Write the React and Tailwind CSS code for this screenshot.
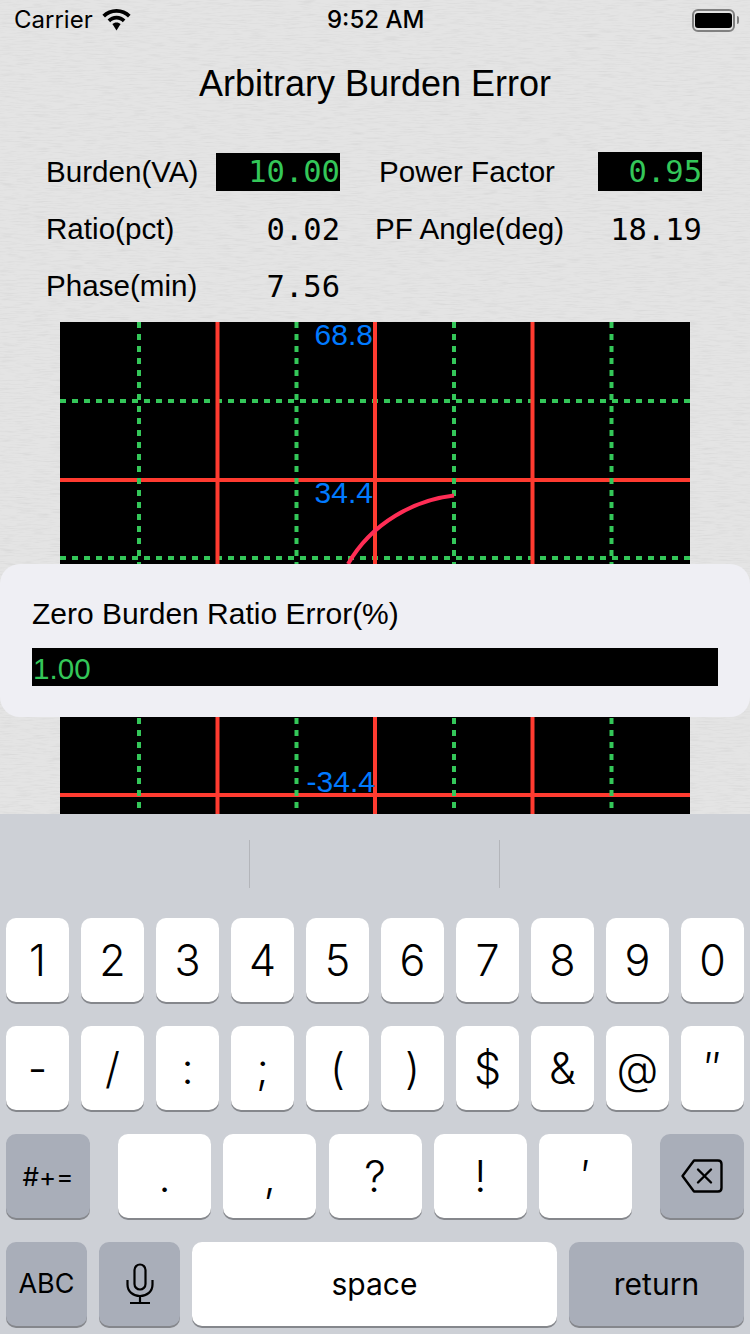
import React from 'react';

const sans = "font-['Liberation_Sans',Arial,sans-serif]";
const mono = "font-['DejaVu_Sans_Mono',monospace]";

const WifiIcon = () => (
    <svg width="29" height="22" viewBox="0 0 29 22" fill="#000">
        <path d="M14.5 0C9 0 4 2.200 0.400 5.800L3 8.600C6 5.600 10 3.800 14.500 3.800S23 5.600 26 8.600L28.600 5.800C25 2.200 20 0 14.500 0z" />
        <path d="M14.500 6.800C11 6.800 8 8.200 5.600 10.500L8.200 13.200C9.900 11.600 12.100 10.600 14.500 10.600S19.100 11.600 20.800 13.200L23.400 10.500C21 8.200 18 6.800 14.500 6.800z" />
        <path d="M14.500 13.400C12.800 13.400 11.400 14 10.400 15L14.500 21.500L18.600 15C17.600 14 16.200 13.400 14.500 13.400z" />
    </svg>
);

const BatteryIcon = () => (
    <div className="flex items-center gap-[2px]">
        <div className="w-[43px] h-[23px] rounded-[6px] border-2 border-[#808080] py-[2px] px-[1px]">
            <div className="w-full h-full rounded-[3px] bg-black" />
        </div>
        <div className="w-[2px] h-[8px] rounded-r-sm bg-[#808080]" />
    </div>
);

const MicIcon = () => (
    <svg width="30" height="42" viewBox="0 0 30 42" fill="none" stroke="#000" strokeWidth="2.2">
        <rect x="9.500" y="1.500" width="11" height="25" rx="5.500" />
        <path d="M2.500 17v4.500C2.500 28.500 8 33 15 33s12.500-4.500 12.500-11.500V17" />
        <path d="M15 33v7M5 40h20" />
    </svg>
);

const DeleteIcon = () => (
    <svg width="42" height="34" viewBox="0 0 42 34" fill="none" stroke="#000" strokeWidth="2.4" strokeLinejoin="round">
        <path d="M13 1.500H37C39 1.500 40.500 3 40.500 5V29C40.500 31 39 32.500 37 32.500H13L1.500 17z" />
        <path d="M17 10.500L30 23.500M30 10.500L17 23.500" strokeLinecap="round" />
    </svg>
);

const Key = ({ children, className = '', dark = false }) => (
    <div className={`h-[84px] rounded-[10px] flex items-center justify-center text-black shadow-[0_2px_0_#85878c] ${dark ? 'bg-[#a9aeb9]' : 'bg-white'} ${className}`}>
        {children}
    </div>
);

const ChartGrid = () => {
    const greenV = [79, 236.500, 394, 551.500];
    const redV = [157.500, 315, 472.500];
    return (
        <svg width="630" height="492" viewBox="0 0 630 492" className="block bg-black">
            {[158, 473].map((y) => (
                <line key={y} x1="0" x2="630" y1={y} y2={y} stroke="#ff3b30" strokeWidth="4" />
            ))}
            {greenV.map((x) => (
                <line key={x} x1={x} x2={x} y1="0" y2="492" stroke="#34c759" strokeWidth="4" strokeDasharray="6 6" />
            ))}
            {[79, 236].map((y) => (
                <line key={y} x1="0" x2="630" y1={y} y2={y} stroke="#34c759" strokeWidth="4" strokeDasharray="6 6" />
            ))}
            {redV.map((x) => (
                <line key={x} x1={x} x2={x} y1="0" y2="492" stroke="#ff3b30" strokeWidth="4" />
            ))}
            <path d="M394 173.500C355 178 312 200 288 242" fill="none" stroke="#ff2d55" strokeWidth="4" />
            <g fill="#007aff" fontSize="30" fontFamily="'Liberation Sans', Arial, sans-serif" textAnchor="end">
                <text x="313" y="23">68.8</text>
                <text x="313" y="181">34.4</text>
                <text x="315" y="470">-34.4</text>
            </g>
        </svg>
    );
};

const App = () => {
    const digits = ['1', '2', '3', '4', '5', '6', '7', '8', '9', '0'];
    const symbols = ['-', '/', ':', ';', '(', ')', '$', '&', '@', '″'];
    const punct = ['.', ',', '?', '!', '′'];

    return (
        <div className={`relative w-[750px] h-[1334px] overflow-hidden flex flex-col bg-[#e4e4e4] text-black ${sans}`}>
            {/* paper texture behind everything */}
            <svg width="750" height="814" className="absolute top-0 left-0">
                <filter id="paper">
                    <feTurbulence type="fractalNoise" baseFrequency="0.06 0.7" numOctaves="3" seed="4" />
                    <feColorMatrix values="0 0 0 0 0.65  0 0 0 0 0.65  0 0 0 0 0.65  0.900 0.900 0 0 -0.830" />
                </filter>
                <rect width="750" height="814" filter="url(#paper)" />
            </svg>

            <div className="relative flex-1 min-h-0 flex flex-col">
                <div className="relative h-[40px] flex items-center justify-between pl-[14px] pr-[11px] font-['Inter',sans-serif]">
                    <div className="flex items-center gap-[9px]">
                        <span className="text-[24px] leading-none">Carrier</span>
                        <WifiIcon />
                    </div>
                    <span className="absolute left-[327px] text-[24px] leading-none font-medium">9:52 AM</span>
                    <BatteryIcon />
                </div>

                <div className="h-[88px] flex items-center justify-center text-[36px]">Arbitrary Burden Error</div>

                <div className="mt-[16px] ml-[46px] grid grid-cols-[170px_124px_258px_104px] auto-rows-[57px] items-center text-[29.600px]">
                    <span>Burden(VA)</span>
                    <div className={`h-[38px] -mt-[2px] bg-black text-[#34c759] text-right text-[30.500px] leading-[38px] ${mono}`}>10.00</div>
                    <span className="pl-[39px]">Power Factor</span>
                    <div className={`h-[39px] -mt-[2px] bg-black text-[#34c759] text-right text-[30.500px] leading-[39px] ${mono}`}>0.95</div>

                    <span>Ratio(pct)</span>
                    <div className={`text-right text-[30.500px] ${mono}`}>0.02</div>
                    <span className="pl-[35px]">PF Angle(deg)</span>
                    <div className={`text-right text-[30.500px] ${mono}`}>18.19</div>

                    <span>Phase(min)</span>
                    <div className={`text-right text-[30.500px] ${mono}`}>7.56</div>
                </div>

                <div className="mt-[7px] mx-[60px] flex-1 min-h-0 overflow-hidden">
                    <ChartGrid />
                </div>
            </div>

            {/* alert over the chart */}
            <div className="absolute top-[564px] left-0 w-[750px] h-[153px] rounded-[20px] bg-[#efeff4] px-[32px] pt-[33px]">
                <div className="h-[33px] flex items-center text-[30px]">Zero Burden Ratio Error(%)</div>
                <div className="mt-[18px] h-[38px] bg-black text-[#34c759] text-[29.600px] leading-[42px] pl-[1px]">1.00</div>
            </div>

            <div className="relative h-[520px] shrink-0 bg-[#cdd0d6]">
                <div className="h-[104px] flex pt-[26px]">
                    <div className="ml-[249px] w-px h-[48px] bg-[#b3b5ba]" />
                    <div className="ml-[249px] w-px h-[48px] bg-[#b3b5ba]" />
                </div>

                <div className="flex flex-col gap-[24px] px-[6px] font-['Inter','Liberation_Sans',sans-serif]">
                    <div className="flex gap-[12px]">
                        {digits.map((d) => (
                            <Key key={d} className="w-[63px] text-[43px] font-light">{d}</Key>
                        ))}
                    </div>
                    <div className="flex gap-[12px]">
                        {symbols.map((s) => (
                            <Key key={s} className="w-[63px] text-[43px] font-light">{s}</Key>
                        ))}
                    </div>
                    <div className="flex">
                        <Key dark className="w-[84px] text-[26px]">#+=</Key>
                        <div className="ml-[28px] mr-[28px] flex flex-1 justify-between">
                            {punct.map((p) => (
                                <Key key={p} className="w-[93px] text-[43px] font-light">{p}</Key>
                            ))}
                        </div>
                        <Key dark className="w-[84px]"><DeleteIcon /></Key>
                    </div>
                    <div className="flex gap-[12px]">
                        <Key dark className="w-[81px] text-[27px]">ABC</Key>
                        <Key dark className="w-[81px]"><MicIcon /></Key>
                        <Key className="w-[365px] text-[30px]">space</Key>
                        <Key dark className="flex-1 text-[30px]">return</Key>
                    </div>
                </div>
            </div>
        </div>
    );
};

export default App;
